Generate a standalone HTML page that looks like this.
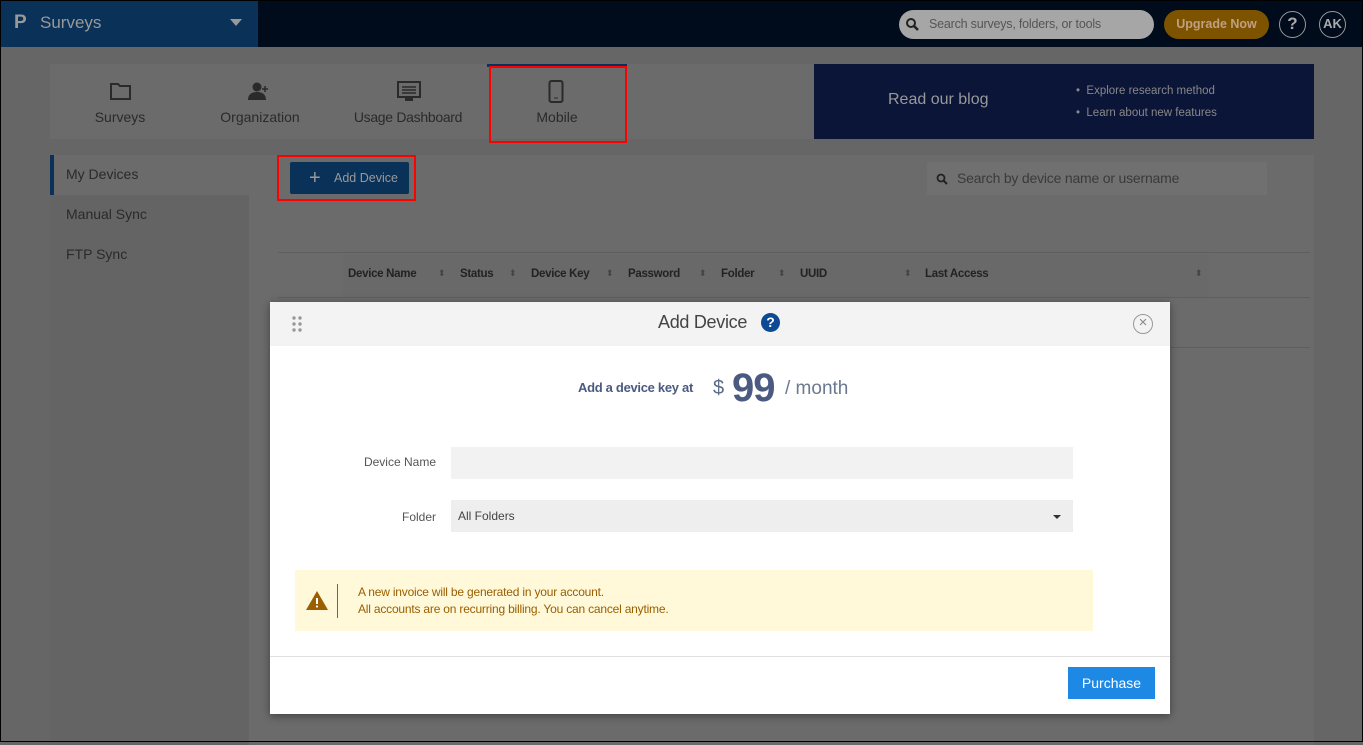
<!DOCTYPE html><html><head><meta charset="utf-8"><style>
*{box-sizing:border-box;margin:0;padding:0}
body{width:1363px;height:742px;overflow:hidden;background:#666;font-family:"Liberation Sans",sans-serif;position:relative}
.a{position:absolute}
.t{font-size:13px;color:#2a2a2a}
.h{top:268px;font-size:11.5px;font-weight:bold;color:#222;letter-spacing:-0.3px}
.s{top:268px;font-size:9px;color:#444}
</style></head><body>
<div class="a" style="left:0;top:0;width:1363px;height:47px;background:#000b1c"></div>
<div class="a" style="left:1px;top:1px;width:257px;height:46px;background:#0a3157"></div>
<div class="a" style="left:14px;top:12px;color:#999;font-size:19px;font-weight:bold">P</div>
<div class="a" style="left:40px;top:13px;color:#999;font-size:17px">Surveys</div>
<div class="a" style="left:230px;top:19px;border-left:6px solid transparent;border-right:6px solid transparent;border-top:7px solid #999"></div>
<div class="a" style="left:899px;top:10px;width:255px;height:29px;border-radius:15px;background:#a6a6a6"></div>
<svg class="a" style="left:905px;top:17px" width="14" height="14"><circle cx="6" cy="6" r="4" fill="none" stroke="#222" stroke-width="2"/><path d="M9 9l4 4" stroke="#222" stroke-width="2.5"/></svg>
<div class="a" style="left:929px;top:17px;font-size:12.5px;color:#555;letter-spacing:-0.2px">Search surveys, folders, or tools</div>
<div class="a" style="left:1164px;top:10px;width:105px;height:29px;border-radius:15px;background:#7d5300;color:#bfa080;font-size:12.5px;font-weight:bold;text-align:center;line-height:29px">Upgrade Now</div>
<div class="a" style="left:1279px;top:11px;width:27px;height:27px;border-radius:50%;border:1.5px solid #999;color:#aaa;font-weight:bold;font-size:17px;text-align:center;line-height:24px">?</div>
<div class="a" style="left:1319px;top:11px;width:27px;height:27px;border-radius:50%;border:1.5px solid #999;color:#aaa;font-weight:bold;font-size:13px;text-align:center;line-height:24px">AK</div>

<div class="a" style="left:50px;top:64px;width:764px;height:75px;background:#6b6b6b"></div>
<div class="a" style="left:487px;top:64px;width:140px;height:3px;background:#0a3157"></div>
<svg class="a" style="left:110px;top:82px" width="22" height="18"><path d="M1 2h7l2 2h10v13H1z" fill="none" stroke="#2a2a2a" stroke-width="2"/></svg>
<svg class="a" style="left:248px;top:82px" width="26" height="18"><circle cx="9" cy="5" r="4.5" fill="#2a2a2a"/><path d="M0 18c0-6 4-8 9-8s9 2 9 8z" fill="#2a2a2a"/><path d="M17 4v6M14 7h6" stroke="#2a2a2a" stroke-width="1.5"/></svg>
<svg class="a" style="left:397px;top:81px" width="24" height="22"><rect x="1" y="1" width="22" height="15" fill="none" stroke="#2a2a2a" stroke-width="2"/><path d="M5 6h14M5 9h14M5 12h14" stroke="#2a2a2a" stroke-width="1.5"/><path d="M8 16h8v4H8z" fill="#2a2a2a"/></svg>
<svg class="a" style="left:548px;top:80px" width="16" height="23"><rect x="1.5" y="1" width="13" height="21" rx="2" fill="none" stroke="#2a2a2a" stroke-width="2"/><path d="M6 18h4" stroke="#2a2a2a"/></svg>
<div class="a t" style="left:50px;top:109px;width:140px;text-align:center;font-size:14px">Surveys</div>
<div class="a t" style="left:190px;top:109px;width:140px;text-align:center;font-size:14px">Organization</div>
<div class="a t" style="left:338px;top:109px;width:140px;text-align:center;font-size:14px;letter-spacing:-0.3px">Usage Dashboard</div>
<div class="a t" style="left:487px;top:109px;width:140px;text-align:center;font-size:14px">Mobile</div>
<div class="a" style="left:489px;top:66px;width:138px;height:77px;border:2px solid #f00"></div>
<div class="a" style="left:814px;top:64px;width:500px;height:75px;background:#0b1538"></div>
<div class="a" style="left:888px;top:91px;color:#999;font-size:16px">Read our blog</div>
<div class="a" style="left:1076px;top:80px;color:#888;font-size:11.5px;line-height:22px">•&nbsp; Explore research method<br>•&nbsp; Learn about new features</div>

<div class="a" style="left:50px;top:155px;width:1264px;height:590px;background:#6b6b6b"></div>
<div class="a" style="left:50px;top:155px;width:199px;height:40px;background:#6b6b6b;border-left:4px solid #0a3157"></div>
<div class="a" style="left:50px;top:195px;width:199px;height:550px;background:#646464"></div>
<div class="a t" style="left:66px;top:166px;font-size:14px">My Devices</div>
<div class="a t" style="left:66px;top:206px;font-size:14px">Manual Sync</div>
<div class="a t" style="left:66px;top:246px;font-size:14px">FTP Sync</div>
<div class="a" style="left:290px;top:162px;width:119px;height:32px;background:#0a3157;border-radius:2px;color:#999;font-size:12.5px;line-height:32px;padding-left:44px">Add Device</div>
<div class="a" style="left:309px;top:170px;color:#999;font-size:20px;line-height:16px">+</div>
<div class="a" style="left:277px;top:155px;width:139px;height:46px;border:2px solid #f00"></div>
<div class="a" style="left:927px;top:162px;width:340px;height:33px;background:#707070"></div>
<svg class="a" style="left:936px;top:173px" width="12" height="12"><circle cx="5" cy="5" r="3.5" fill="none" stroke="#222" stroke-width="1.8"/><path d="M7.5 7.5l3.5 3.5" stroke="#222" stroke-width="2"/></svg>
<div class="a" style="left:957px;top:170px;font-size:14px;color:#3a3a3a;letter-spacing:-0.2px">Search by device name or username</div>
<div class="a" style="left:278px;top:252px;width:1032px;height:1px;background:#5e5e5e"></div>
<div class="a" style="left:342px;top:255px;width:868px;height:42px;background:#696969"></div>
<div class="a" style="left:278px;top:297px;width:1032px;height:1px;background:#5e5e5e"></div>
<div class="a" style="left:278px;top:347px;width:1032px;height:1px;background:#5e5e5e"></div>
<div class="a h" style="left:348px">Device Name</div>
<div class="a h" style="left:460px">Status</div>
<div class="a h" style="left:531px">Device Key</div>
<div class="a h" style="left:628px">Password</div>
<div class="a h" style="left:721px">Folder</div>
<div class="a h" style="left:800px">UUID</div>
<div class="a h" style="left:925px">Last Access</div>
<div class="a s" style="left:438px">⬍</div>
<div class="a s" style="left:509px">⬍</div>
<div class="a s" style="left:606px">⬍</div>
<div class="a s" style="left:699px">⬍</div>
<div class="a s" style="left:778px">⬍</div>
<div class="a s" style="left:904px">⬍</div>
<div class="a s" style="left:1195px">⬍</div>

<div class="a" style="left:270px;top:302px;width:900px;height:412px;background:#fff;box-shadow:0 2px 8px rgba(0,0,0,.4)"></div>
<div class="a" style="left:270px;top:302px;width:900px;height:44px;background:#f3f3f3"></div>
<svg class="a" style="left:291px;top:316px" width="12" height="16" fill="#999"><circle cx="3" cy="2" r="1.7"/><circle cx="9" cy="2" r="1.7"/><circle cx="3" cy="8" r="1.7"/><circle cx="9" cy="8" r="1.7"/><circle cx="3" cy="14" r="1.7"/><circle cx="9" cy="14" r="1.7"/></svg>
<div class="a" style="left:658px;top:312px;font-size:18px;color:#444;letter-spacing:-0.3px">Add Device</div>
<div class="a" style="left:761px;top:313px;width:19px;height:19px;border-radius:50%;background:#0c4a96;color:#fff;font-weight:bold;font-size:14px;text-align:center;line-height:19px">?</div>
<div class="a" style="left:1133px;top:314px;width:20px;height:20px;border-radius:50%;border:1.5px solid #999;color:#888;font-size:15px;text-align:center;line-height:16px">×</div>
<div class="a" style="left:578px;top:380px;font-size:13px;font-weight:bold;color:#4a5a80;letter-spacing:-0.3px">Add a device key at</div>
<div class="a" style="left:713px;top:377px;font-size:20px;color:#5a6a88">$</div>
<div class="a" style="left:732px;top:366px;font-size:40px;font-weight:bold;color:#4a5a80;letter-spacing:-1px">99</div>
<div class="a" style="left:785px;top:378px;font-size:19px;color:#6a7890">/ month</div>
<div class="a" style="left:300px;top:455px;width:136px;text-align:right;font-size:12px;color:#555">Device Name</div>
<div class="a" style="left:451px;top:447px;width:622px;height:32px;background:#f2f2f2"></div>
<div class="a" style="left:300px;top:510px;width:136px;text-align:right;font-size:12px;color:#555">Folder</div>
<div class="a" style="left:451px;top:500px;width:622px;height:32px;background:#eee;font-size:12px;color:#444;line-height:32px;padding-left:7px">All Folders</div>
<div class="a" style="left:1053px;top:515px;border-left:4px solid transparent;border-right:4px solid transparent;border-top:4px solid #333"></div>
<div class="a" style="left:295px;top:570px;width:798px;height:61px;background:#fff8d9"></div>
<svg class="a" style="left:305px;top:590px" width="24" height="21"><path d="M12 1L23 20H1z" fill="#9a5f00"/><path d="M12 8v6" stroke="#fff" stroke-width="2"/><circle cx="12" cy="16.5" r="1.1" fill="#fff"/></svg>
<div class="a" style="left:337px;top:584px;width:1px;height:34px;background:#9a5f00"></div>
<div class="a" style="left:358px;top:584px;font-size:12px;color:#9a5f00;line-height:17px;letter-spacing:-0.2px">A new invoice will be generated in your account.<br>All accounts are on recurring billing. You can cancel anytime.</div>
<div class="a" style="left:270px;top:656px;width:900px;height:1px;background:#e0e0e0"></div>
<div class="a" style="left:1068px;top:667px;width:87px;height:32px;background:#1e88e5;color:#fff;font-size:14px;text-align:center;line-height:32px">Purchase</div>
<div class="a" style="left:0;top:0;width:1363px;height:742px;border:1px solid #000"></div>
</body></html>
